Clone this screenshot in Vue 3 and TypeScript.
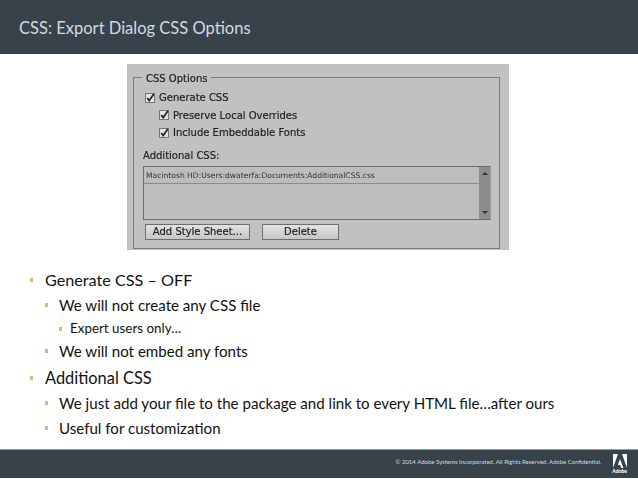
<script setup lang="ts">
interface Item { text: string; level: number }
const items: Item[] = [
  { text: 'Generate CSS – OFF', level: 1 },
  { text: 'We will not create any CSS file', level: 2 },
  { text: 'Expert users only…', level: 3 },
  { text: 'We will not embed any fonts', level: 2 },
  { text: 'Additional CSS', level: 1 },
  { text: 'We just add your file to the package and link to every HTML file…after ours', level: 2 },
  { text: 'Useful for customization', level: 2 },
]
const checks = [
  { text: 'Generate CSS', sub: false },
  { text: 'Preserve Local Overrides', sub: true },
  { text: 'Include Embeddable Fonts', sub: true },
]
</script>

<template>
  <div class="slide">
    <header class="head">CSS: Export Dialog CSS Options</header>
    <main class="body">
      <section class="dialog">
        <div class="fieldset">
          <div class="legend">CSS Options</div>
          <div v-for="c in checks" :key="c.text" class="check" :class="{ sub: c.sub }">
            <svg class="box" width="10" height="10" viewBox="0 0 10 10">
              <rect x="0.5" y="0.5" width="9" height="9" fill="#e4e4e4" stroke="#777" />
              <path d="M2.2 5 L4.2 7.6 L8.8 1" fill="none" stroke="#222" stroke-width="1.7" />
            </svg>
            <span>{{ c.text }}</span>
          </div>
          <div class="addl">Additional CSS:</div>
          <div class="listbox">
            <div class="list">
              <div class="row">Macintosh HD:Users:dwaterfa:Documents:AdditionalCSS.css</div>
            </div>
            <div class="scroll">
              <span class="up"></span>
              <span class="down"></span>
            </div>
          </div>
          <div class="buttons">
            <div class="btn add">Add Style Sheet...</div>
            <div class="btn del">Delete</div>
          </div>
        </div>
      </section>
      <ul class="bullets">
        <li v-for="i in items" :key="i.text" :class="'l' + i.level">{{ i.text }}</li>
      </ul>
    </main>
    <footer class="foot">
      <span class="legal">© 2014 Adobe Systems Incorporated.  All Rights Reserved.  Adobe Confidential.</span>
      <div class="logo">
        <svg width="14" height="14" viewBox="0 0 14 14">
          <path d="M0 0H5L0 14Z M9 0H14V14Z M7 5L10.4 14H8.2L7.2 11H4.8Z" fill="#fff" />
        </svg>
        <span>Adobe</span>
      </div>
    </footer>
  </div>
</template>

<style>
html, body { margin: 0; background: #fff; }
</style>

<style scoped>
.slide {
  width: 638px;
  height: 479px;
  display: flex;
  flex-direction: column;
  overflow: hidden;
  font-family: "Lato", "Noto Sans", sans-serif;
  background: #fff;
}
.head {
  height: 54px;
  box-sizing: border-box;
  background: #37424b;
  color: #d3dae0;
  font-size: 16.5px;
  line-height: 56px;
  padding-left: 19px;
  flex: none;
}
.body { flex: 1; display: flex; flex-direction: column; min-height: 0; }
.dialog {
  width: 382px;
  height: 186px;
  margin: 10px 0 0 127px;
  box-sizing: border-box;
  background: #c1c1c1;
  padding: 13px 9px 1px 6px;
  flex: none;
  filter: blur(0.45px);
  color: #222;
  font-family: "DejaVu Sans", sans-serif;
  font-size: 10px;
  -webkit-text-stroke: 0.2px #222;
}
.fieldset {
  height: 100%;
  box-sizing: border-box;
  border: 1px solid #7b7b7b;
  padding: 11px 8px 0 9px;
  position: relative;
}
.legend {
  position: absolute;
  left: 8px;
  top: -6px;
  background: #c1c1c1;
  padding: 0 4px;
  line-height: 14px;
}
.check { height: 18px; display: flex; align-items: center; gap: 4px; margin-left: 2px; margin-top: -0.5px; }
.check.sub { margin-left: 16px; }
.box { flex: none; }
.addl { margin-top: 7px; line-height: 14px; height: 17px; }
.listbox {
  display: flex;
  height: 54px;
  border: 1px solid #6c6c6c;
  border-right-color: #999;
  box-sizing: border-box;
  background: #bdbdbd;
}
.list { flex: 1; }
.row {
  font-size: 7.6px;
  height: 16px;
  line-height: 17px;
  padding-left: 2px;
  border-bottom: 1px solid #8a8a8a;
  color: #333;
  -webkit-text-stroke: 0;
}
.scroll {
  width: 11px;
  background: #8d8d8d;
  display: flex;
  flex-direction: column;
  justify-content: space-between;
  align-items: center;
  padding: 5px 0;
  box-sizing: border-box;
}
.up, .down { width: 0; height: 0; border-left: 3px solid transparent; border-right: 3px solid transparent; }
.up { border-bottom: 3px solid #333; }
.down { border-top: 3px solid #333; }
.buttons { display: flex; gap: 12px; margin: 4px 0 0 2px; }
.btn {
  height: 16px;
  box-sizing: border-box;
  border: 1px solid #6f6f6f;
  background: linear-gradient(#e2e2e2, #c6c6c6);
  text-align: center;
  line-height: 14px;
  color: #222;
}
.add { width: 105px; }
.del { width: 77px; }
.bullets {
  list-style: none;
  margin: 18px 0 0;
  padding: 0;
  color: #111;
}
.bullets li { position: relative; white-space: nowrap; }
.bullets li::before {
  content: "";
  position: absolute;
  width: 3px;
  height: 4px;
  background: #e6b576;
}
.l1 { font-size: 16.2px; line-height: 24px; height: 24px; padding-left: 45px; margin-bottom: 1px; }
.l1::before { left: 30px; top: 10px; }
.l2 { font-size: 15.1px; line-height: 24px; height: 24px; padding-left: 59px; margin-bottom: 1px; }
.l2::before { left: 45px; top: 10px; }
.l3 { font-size: 13.4px; line-height: 21px; height: 21px; padding-left: 70px; margin-bottom: 0; }
.l3::before { left: 59px; top: 9px; }
.l2:nth-child(4) { margin-bottom: 3px; }
.l1:nth-child(5) { font-size: 16.4px; }
.foot {
  height: 29px;
  flex: none;
  box-sizing: border-box;
  margin-bottom: 1px;
  background: #37424b;
  border-top: 1px solid #9aa0a4;
  display: flex;
  align-items: center;
  justify-content: flex-end;
  color: #d3dae0;
  font-size: 6px;
  padding-right: 11px;
}
.legal { margin-right: 11px; margin-top: -6px; white-space: pre; }
.logo {
  display: flex;
  flex-direction: column;
  align-items: center;
  color: #fff;
  font-size: 5px;
  font-weight: 900;
  line-height: 6px;
}
</style>
